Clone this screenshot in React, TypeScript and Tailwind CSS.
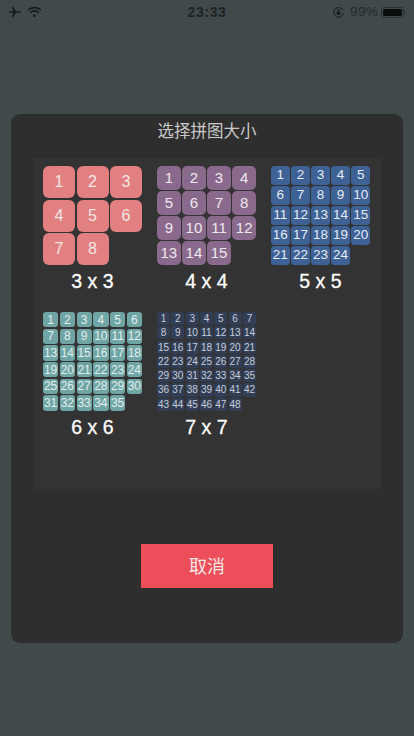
const FONT = "font-['Liberation_Sans','Noto_Sans_CJK_SC',sans-serif]";

const PUZZLES = [
  { n: 3, label: "3 x 3", grid: "grid-cols-3 gap-[1.5px]", tile: "h-[32px] rounded-[6px] bg-[#e27f80] text-[16px] text-[#f3e6e6]" },
  { n: 4, label: "4 x 4", grid: "grid-cols-4 gap-[1.4px]", tile: "h-[23.7px] rounded-[5px] bg-[#8a6a8c] text-[15px] text-[#eee8ee]" },
  { n: 5, label: "5 x 5", grid: "grid-cols-5 gap-[1.5px]", tile: "h-[18.5px] rounded-[3.5px] bg-[#3e6196] text-[13.5px] text-[#e6ecf4]" },
  { n: 6, label: "6 x 6", grid: "grid-cols-6 gap-[1.5px]", tile: "h-[15.2px] rounded-[3px] bg-[#6fa5a4] text-[12px] text-[#e3eeee]" },
  { n: 7, label: "7 x 7", grid: "grid-cols-7 gap-[1.2px]", tile: "h-[13.1px] rounded-[2.5px] bg-[#323e56] text-[10px] text-[#c8ced9]" },
];

function PuzzleOption({ n, label, grid, tile }: (typeof PUZZLES)[number]) {
  const nums = Array.from({ length: n * n - 1 }, (_, i) => i + 1);
  return (
    <div className="flex flex-col">
      <div className={`grid h-[99px] w-[99px] content-start ${grid}`}>
        {nums.map((num) => (
          <div key={num} className={`flex items-center justify-center ${tile}`}>
            {num}
          </div>
        ))}
      </div>
      <p className="mt-[5px] text-center text-[19.5px] leading-[22px] text-white [-webkit-text-stroke:0.3px_white]">{label}</p>
    </div>
  );
}

function StatusBar() {
  return (
    <div className="grid h-[24px] grid-cols-3 items-center px-[9px] text-[#161b1b]">
      <div className="flex items-center gap-[6px]">
        <svg width="12" height="12" viewBox="0 0 12 12" fill="currentColor">
          <path d="M0 6c0-.5.5-.8 1-.8h3.4L2.6.6h1.3l3.2 4.6h3.2c.9 0 1.7.3 1.7.8s-.8.8-1.7.8H7.1l-3.2 4.6H2.6l1.8-4.6H1C.5 6.8 0 6.5 0 6z" />
        </svg>
        <svg width="15" height="12" viewBox="0 0 15 12" fill="none" stroke="currentColor" strokeWidth="1.7">
          <path d="M1 4.2a9.3 9.3 0 0 1 13 0" />
          <path d="M3.4 6.6a5.9 5.9 0 0 1 8.2 0" />
          <circle cx="7.5" cy="9.7" r="1.3" fill="currentColor" stroke="none" />
        </svg>
      </div>
      <span className="text-center text-[14px] font-bold tracking-[0.6px] opacity-80">23:33</span>
      <div className="flex items-center justify-end">
        <svg width="11" height="11" viewBox="0 0 11 11" fill="none" stroke="currentColor" strokeWidth="1">
          <path d="M9.8 3.2A4.8 4.8 0 1 0 10.3 6" />
          <rect x="3.6" y="4.8" width="3.8" height="2.9" fill="currentColor" stroke="none" />
          <path d="M4.3 4.8V4a1.2 1.2 0 0 1 2.4 0v.8" strokeWidth="0.8" />
        </svg>
        <span className="ml-[6px] text-[13.5px] tracking-[0.3px] opacity-70">99%</span>
        <div className="ml-[3px] flex h-[11px] w-[23px] items-center rounded-[3px] border border-[#2b3232] p-px">
          <div className="h-full w-full rounded-[1.5px] bg-[#0c0e0e]" />
        </div>
        <div className="h-[4px] w-px rounded-r-sm bg-[#2b3232]" />
      </div>
    </div>
  );
}

export default function App() {
  return (
    <div className={`h-[736px] w-[414px] overflow-hidden bg-[#414a4b] ${FONT}`}>
      <StatusBar />
      <div className="mx-[11px] mt-[90px] flex h-[529px] w-[392px] flex-col items-center rounded-[9px] bg-[#2e2e2e]">
        <h1 className="mt-[6px] text-[16.5px] leading-[23px] text-[#c9c9c9]">选择拼图大小</h1>
        <div className="mt-[15px] grid h-[331px] w-[348px] grid-cols-[99px_99px_99px] content-start gap-x-[15px] gap-y-[20px] bg-[#333333] pl-[10px] pt-[8px]">
          {PUZZLES.map((p) => (
            <PuzzleOption key={p.n} {...p} />
          ))}
        </div>
        <button className="mt-[55px] h-[44px] w-[132px] bg-[#ec4f5a] pt-[2px] text-[18px] text-[#f7e4e4]">取消</button>
      </div>
    </div>
  );
}
